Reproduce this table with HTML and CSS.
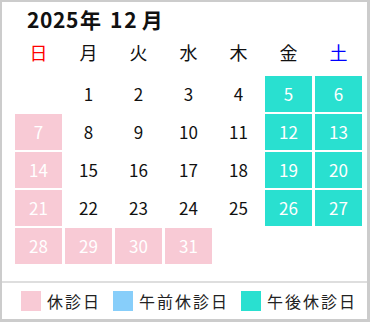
FILE: index.html
```html
<!DOCTYPE html>
<html lang="ja">
<head>
<meta charset="utf-8">
<link rel="stylesheet" href="styles.css">
</head>
<body>
<div class="cal">
  <div class="title"><span class="yr">2025</span><span class="kj">年</span><span class="mo">12</span><span class="kj kj-m">月</span></div>
  <div class="week">
    <div class="wd sun">日</div>
    <div class="wd">月</div>
    <div class="wd">火</div>
    <div class="wd">水</div>
    <div class="wd">木</div>
    <div class="wd">金</div>
    <div class="wd sat">土</div>
  </div>
  <div class="days">
    <div class="d"></div>
    <div class="d">1</div>
    <div class="d">2</div>
    <div class="d">3</div>
    <div class="d">4</div>
    <div class="d pm">5</div>
    <div class="d pm">6</div>
    <div class="d off">7</div>
    <div class="d">8</div>
    <div class="d">9</div>
    <div class="d">10</div>
    <div class="d">11</div>
    <div class="d pm">12</div>
    <div class="d pm">13</div>
    <div class="d off">14</div>
    <div class="d">15</div>
    <div class="d">16</div>
    <div class="d">17</div>
    <div class="d">18</div>
    <div class="d pm">19</div>
    <div class="d pm">20</div>
    <div class="d off">21</div>
    <div class="d">22</div>
    <div class="d">23</div>
    <div class="d">24</div>
    <div class="d">25</div>
    <div class="d pm">26</div>
    <div class="d pm">27</div>
    <div class="d off">28</div>
    <div class="d off">29</div>
    <div class="d off">30</div>
    <div class="d off">31</div>
  </div>
  <div class="legend">
    <div class="item"><span class="sw sw-off"></span><span class="lbl">休診日</span></div>
    <div class="item"><span class="sw sw-am"></span><span class="lbl">午前休診日</span></div>
    <div class="item"><span class="sw sw-pm"></span><span class="lbl">午後休診日</span></div>
  </div>
</div>
</body>
</html>
```

FILE: styles.css
```css
html, body {
  margin: 0;
  padding: 0;
  background: #ffffff;
}
.cal {
  box-sizing: border-box;
  width: 370px;
  height: 322px;
  border-style: solid;
  border-color: #cccccc;
  border-width: 2px 3px 3px 2px;
  padding: 5px 0 0 13px;
  font-family: "Noto Sans CJK JP", "Noto Sans", sans-serif;
  color: #111111;
  display: flex;
  flex-direction: column;
}
.title {
  font-size: 21px;
  font-weight: bold;
  line-height: 24px;
  height: 24px;
  padding-left: 12px;
  display: flex;
}
.yr {
  letter-spacing: 0.6px;
}
.kj {
  margin-left: 1px;
}
.mo {
  margin-left: 9px;
  letter-spacing: 2px;
}
.kj-m {
  margin-left: 3px;
}
.week {
  margin-top: 6px;
  display: grid;
  grid-template-columns: repeat(7, 47px);
  column-gap: 3px;
}
.wd {
  height: 30px;
  line-height: 30px;
  font-size: 18px;
  text-align: center;
}
.sun { color: #ff0000; }
.sat { color: #0000ff; }
.days {
  margin-top: 9px;
  display: grid;
  grid-template-columns: repeat(7, 47px);
  grid-auto-rows: 36px;
  gap: 2px 3px;
}
.d {
  font-size: 17px;
  line-height: 36px;
  text-align: center;
}
.off {
  background: #f8cad5;
  color: #ffffff;
}
.pm {
  background: #29e0d0;
  color: #ffffff;
}
.legend {
  margin: 17px 0 0 -13px;
  border-top: 2px solid #dedede;
  height: 36px;
  display: flex;
  align-items: center;
  padding-left: 19px;
  gap: 12px;
}
.item {
  display: flex;
  align-items: center;
  gap: 6px;
}
.sw {
  width: 20px;
  height: 20px;
  display: block;
}
.sw-off { background: #f8cad5; }
.sw-am { background: #87cefa; }
.sw-pm { background: #29e0d0; }
.lbl {
  font-size: 16px;
  letter-spacing: 2px;
  color: #222222;
  line-height: 20px;
}
```
